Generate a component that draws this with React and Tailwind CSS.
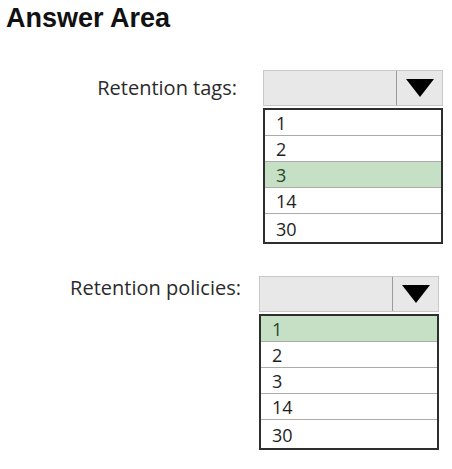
const groups = [
  {
    label: "Retention tags:",
    left: "w-[263px] pr-[26px]",
    labelPad: "pt-0",
    options: ["1", "2", "3", "14", "30"],
    selected: "3",
  },
  {
    label: "Retention policies:",
    left: "w-[259px] pr-[18px]",
    labelPad: "-mt-[6px]",
    options: ["1", "2", "3", "14", "30"],
    selected: "1",
  },
];

const Caret = () => (
  <svg width="28" height="18" viewBox="0 0 28 18">
    <polygon points="0,0 28,0 14,18" fill="#000" />
  </svg>
);

// row heights include the 1px separator (border-box)
const rowHeight = (i, n) => {
  if (i === 0) return "h-[25px]";
  if (i === n - 1) return "h-[29px] border-t border-[#ababab]";
  return "h-[26px] border-t border-[#ababab]";
};

const Dropdown = ({ options, selected }) => (
  <div className="w-[180px]">
    <div className="flex h-[36px] border border-[#c8c8c8] bg-[#e8e8e8]">
      <div className="flex-1" />
      <div className="flex w-[46px] items-center justify-center border-l border-[#9a9a9a]">
        <Caret />
      </div>
    </div>
    <div className="mt-[2px] border-2 border-[#2e2e2e] bg-white">
      {options.map((opt, i) => (
        <div
          key={opt}
          className={`flex items-center pl-[11px] pt-[2px] text-[18px] ${rowHeight(i, options.length)} ${
            opt === selected ? "bg-[#c6e0c6] text-[#2a482a]" : "text-[#1e1e1e]"
          }`}
        >
          {opt}
        </div>
      ))}
    </div>
  </div>
);

export default function App() {
  return (
    <div className="h-[469px] w-[452px] bg-white font-['Open_Sans',sans-serif]">
      <h1 className="pl-[6px] pt-[5px] font-['Liberation_Sans',Arial,sans-serif] text-[27px] font-bold leading-none text-[#111]">
        Answer Area
      </h1>

      <div className="mt-[38px] flex flex-col gap-[32px]">
        {groups.map((g) => (
          <div key={g.label} className="flex items-start">
            <div className={`${g.left} flex h-[36px] shrink-0 items-center justify-end ${g.labelPad}`}>
              <span className="text-[20px] text-[#2b2b2b]">{g.label}</span>
            </div>
            <Dropdown options={g.options} selected={g.selected} />
          </div>
        ))}
      </div>
    </div>
  );
}
